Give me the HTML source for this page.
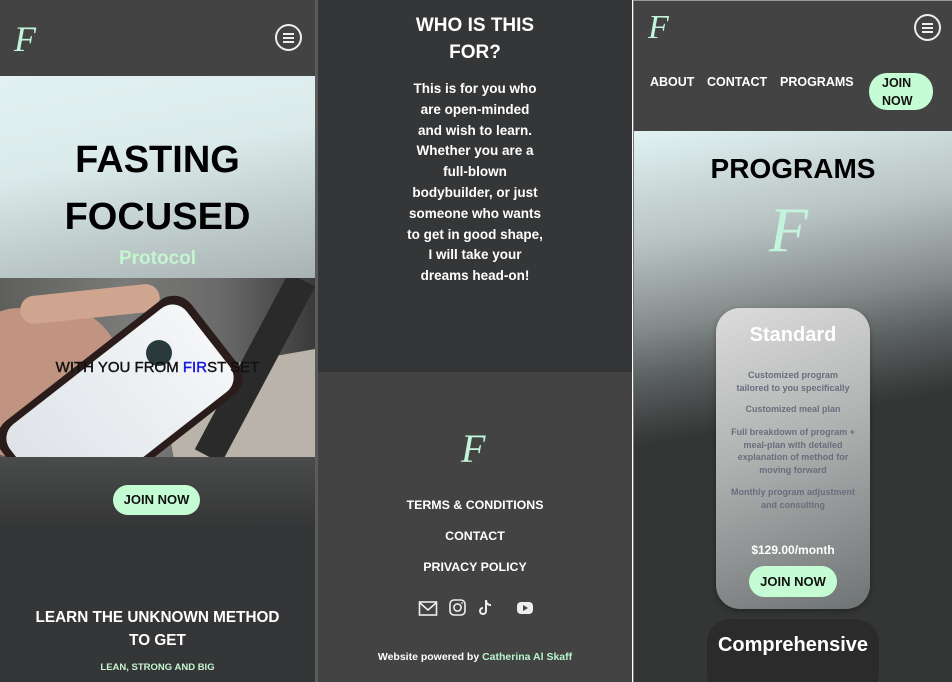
<!DOCTYPE html>
<html><head><meta charset="utf-8"><style>
*{margin:0;padding:0;box-sizing:border-box}
body{width:952px;height:682px;overflow:hidden;background:#fff;font-family:"Liberation Sans",Arial,sans-serif;position:relative;font-weight:bold}
.p{position:absolute;top:0;height:682px;overflow:hidden}
.logo{position:absolute;font-family:"Liberation Serif",serif;font-style:italic;color:#c4f5dc;font-weight:normal}
.menu{position:absolute;width:27px;height:27px;border:2px solid #eee;border-radius:50%}
.menu i{position:absolute;left:6px;width:11px;height:2px;background:#eee}
.c{position:absolute;left:0;right:0;text-align:center}
.btn{position:absolute;background:#c4fdd4;color:#111;border-radius:16px;text-align:center}
</style></head><body>

<!-- Panel 1 -->
<div class="p" style="left:0;width:315px;background:#353637">
  <div style="position:absolute;left:0;top:0;width:315px;height:76px;background:#424342"></div>
  <div class="logo" style="left:14px;top:18px;font-size:36px">F</div>
  <div class="menu" style="left:275px;top:24px"><i style="top:7px"></i><i style="top:11px"></i><i style="top:15px"></i></div>
  <div style="position:absolute;left:0;top:76px;width:315px;height:202px;background:linear-gradient(170deg,#e2f1f1 0%,#dbeaea 40%,#a8b2b2 100%)"></div>
  <div class="c" style="top:132px;font-size:38px;line-height:57px;color:#000">FASTING<br>FOCUSED</div>
  <div class="c" style="top:248px;font-size:19px;color:#c4f5d0">Protocol</div>
  <!-- photo -->
  <div style="position:absolute;left:0;top:278px;width:315px;height:179px;background:linear-gradient(90deg,#5e5e5c 0%,#7a7a78 40%,#6a6a6a 70%,#3a3a3a 100%);overflow:hidden">
    <div style="position:absolute;left:170px;top:80px;width:200px;height:140px;background:#b9b3aa;transform:rotate(-10deg)"></div>
    <div style="position:absolute;left:240px;top:-10px;width:30px;height:200px;background:#2a2a2a;transform:rotate(28deg)"></div>
    <div style="position:absolute;left:-40px;top:30px;width:160px;height:150px;border-radius:60px;background:#c09480"></div>
    <div style="position:absolute;left:20px;top:12px;width:140px;height:28px;border-radius:14px;background:#cfa590;transform:rotate(-6deg)"></div>
    <div style="position:absolute;left:60px;top:10px;width:120px;height:240px;border-radius:22px;background:#2b1c1c;transform:rotate(52deg)"></div>
    <div style="position:absolute;left:67px;top:18px;width:106px;height:224px;border-radius:18px;background:linear-gradient(180deg,#f4f6f8,#dfe3e8);transform:rotate(52deg)"></div>
    <div style="position:absolute;left:146px;top:62px;width:26px;height:26px;border-radius:50%;background:#2a3a3a"></div>
  </div>
  <div class="c" style="top:359px;font-size:15px;color:#111;font-weight:normal;-webkit-text-stroke:.4px #111">WITH YOU FROM <span style="color:#1414e0;-webkit-text-stroke:.4px #1414e0">FIR</span>ST SET</div>
  <div style="position:absolute;left:0;top:457px;width:315px;height:70px;background:linear-gradient(180deg,#4a4b4b,#353637)"></div>
  <div class="btn" style="left:113px;top:485px;width:87px;height:30px;line-height:30px;font-size:13px">JOIN NOW</div>
  <div class="c" style="top:606px;font-size:15.3px;line-height:23px;color:#fff">LEARN THE UNKNOWN METHOD<br>TO GET</div>
  <div class="c" style="top:662px;font-size:9.5px;color:#c4f5d0">LEAN, STRONG AND BIG</div>
</div>
<div style="position:absolute;left:315px;top:0;width:3px;height:682px;background:#5a5b5b"></div>

<!-- Panel 2 -->
<div class="p" style="left:318px;width:314px;background:#353637">
  <div class="c" style="top:12px;font-size:19px;line-height:27px;color:#fff">WHO IS THIS<br>FOR?</div>
  <div class="c" style="top:79px;font-size:13.5px;line-height:20.8px;color:#fff">This is for you who<br>are open-minded<br>and wish to learn.<br>Whether you are a<br>full-blown<br>bodybuilder, or just<br>someone who wants<br>to get in good shape,<br>I will take your<br>dreams head-on!</div>
  <div style="position:absolute;left:0;top:372px;width:314px;height:310px;background:#424342"></div>
  <div class="logo" style="left:143px;top:425px;font-size:40px">F</div>
  <div class="c" style="top:498px;font-size:12.4px;color:#fff">TERMS &amp; CONDITIONS</div>
  <div class="c" style="top:529px;font-size:12.4px;color:#fff">CONTACT</div>
  <div class="c" style="top:560px;font-size:12.4px;color:#fff">PRIVACY POLICY</div>
  <svg style="position:absolute;left:100px;top:597px" width="120" height="22" viewBox="0 0 120 22">
    <rect x="1.5" y="5" width="17" height="13" fill="none" stroke="#eee" stroke-width="1.6"/>
    <path d="M2 6 L10 13 L18 6" fill="none" stroke="#eee" stroke-width="1.6"/>
    <rect x="32" y="3" width="15" height="15" rx="4" fill="none" stroke="#eee" stroke-width="1.6"/>
    <circle cx="39.5" cy="10.5" r="3.6" fill="none" stroke="#eee" stroke-width="1.6"/>
    <circle cx="44" cy="6" r="0.9" fill="#eee"/>
    <path d="M68 3 V14 A3 3 0 1 1 65 11 M68 3 C68 6 70 8 73 8" fill="none" stroke="#eee" stroke-width="2"/>
    <rect x="99" y="5" width="16" height="12" rx="4" fill="#eee"/>
    <path d="M105 8 L110 11 L105 14Z" fill="#424342"/>
  </svg>
  <div class="c" style="top:651px;font-size:10.5px;color:#fff">Website powered by <span style="color:#b8f5cc">Catherina Al Skaff</span></div>
</div>

<!-- Panel 3 -->
<div class="p" style="left:633px;width:319px;background:#343535;border-left:1px solid #777;border-top:1px solid #999">
  <div style="position:absolute;left:0;top:0;width:319px;height:130px;background:#424342"></div>
  <div class="logo" style="left:14px;top:8px;font-size:34px">F</div>
  <div class="menu" style="left:280px;top:13px"><i style="top:7px"></i><i style="top:11px"></i><i style="top:15px"></i></div>
  <div style="position:absolute;left:16px;top:74px;font-size:12.5px;color:#fff">ABOUT</div>
  <div style="position:absolute;left:73px;top:74px;font-size:12.5px;color:#fff">CONTACT</div>
  <div style="position:absolute;left:146px;top:74px;font-size:12.5px;color:#fff">PROGRAMS</div>
  <div class="btn" style="left:235px;top:72px;width:64px;height:37px;border-radius:18px;font-size:12.5px;line-height:18px;text-align:left;padding:1px 0 0 13px">JOIN<br>NOW</div>
  <div style="position:absolute;left:0;top:130px;width:319px;height:330px;background:linear-gradient(170deg,#e2f3f3 0%,#b8c2c2 30%,#838a8a 52%,#5a5f5f 65%,#343535 82%)"></div>
  <div class="c" style="top:152px;font-size:28px;color:#000">PROGRAMS</div>
  <div class="logo" style="left:135px;top:192px;font-size:64px">F</div>
  <div style="position:absolute;left:82px;top:307px;width:154px;height:301px;border-radius:24px;background:linear-gradient(160deg,#dcdcdc 0%,#b0b2b2 45%,#6e7373 100%);box-shadow:0 2px 6px rgba(0,0,0,.3)"></div>
  <div class="c" style="top:323px;font-size:20px;color:#fff">Standard</div>
  <div class="c" style="top:368px;font-size:9px;line-height:12.5px;color:#6b6d7c">Customized program<br>tailored to you specifically</div>
  <div class="c" style="top:403px;font-size:9px;color:#6b6d7c">Customized meal plan</div>
  <div class="c" style="top:425px;font-size:9px;line-height:12.5px;color:#6b6d7c">Full breakdown of program +<br>meal-plan with detailed<br>explanation of method for<br>moving forward</div>
  <div class="c" style="top:485px;font-size:9px;line-height:12.5px;color:#6b6d7c">Monthly program adjustment<br>and consulting</div>
  <div class="c" style="top:542px;font-size:12px;color:#fff">$129.00/month</div>
  <div class="btn" style="left:115px;top:565px;width:88px;height:31px;line-height:31px;font-size:13px">JOIN NOW</div>
  <div style="position:absolute;left:73px;top:618px;width:172px;height:80px;border-radius:24px;background:#2b2b2b"></div>
  <div class="c" style="top:633px;font-size:20px;color:#fff">Comprehensive</div>
</div>
</body></html>
